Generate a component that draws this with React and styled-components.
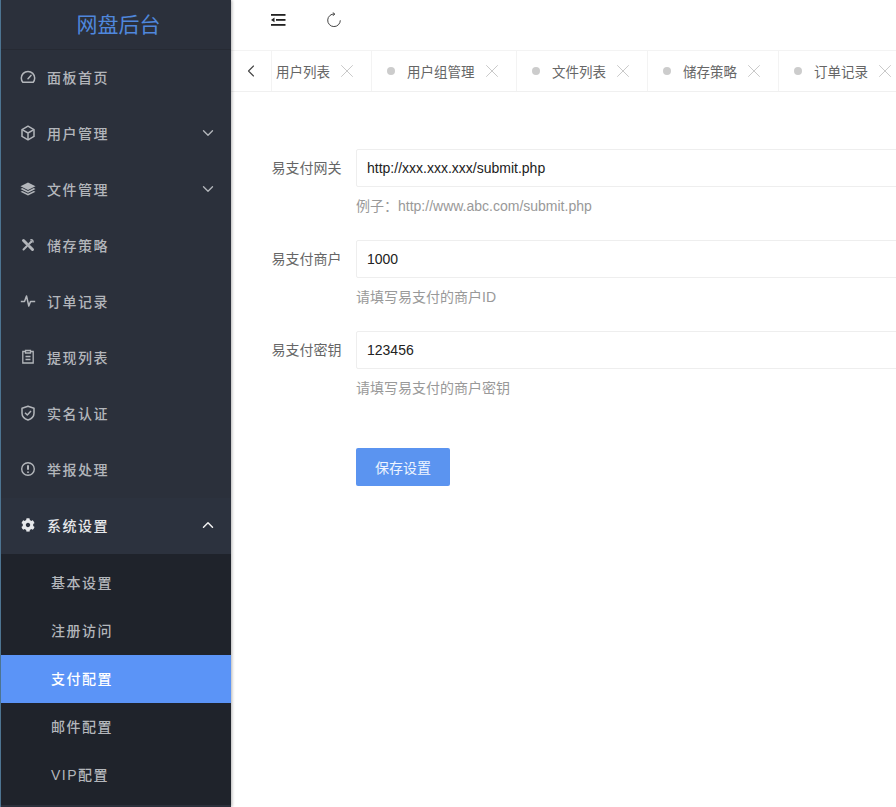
import React from 'react'
import styled, { createGlobalStyle } from 'styled-components'
import { FaCog } from 'react-icons/fa'
import { ChevronDown, ChevronLeft, ChevronUp, X } from 'lucide-react'

const GlobalStyle = createGlobalStyle`
html,body{
    margin:0;
    padding:0;
    background:#fff;
}
*{
    box-sizing:border-box;
}
`

const GaugeIcon = () => (
    <svg width="16" height="16" viewBox="0 0 16 16" fill="none" stroke="currentColor" strokeWidth="1.500">
        <path d="M2.800 13.300h10.400c1-1.200 1.500-2.600 1.500-4.200A6.700 6.700 0 0 0 1.300 9.100c0 1.600.5 3 1.500 4.200z" />
        <path d="M8 9.800 11 6.400" strokeLinecap="round" />
    </svg>
)

const CubeIcon = () => (
    <svg width="16" height="16" viewBox="0 0 16 16" fill="none" stroke="currentColor" strokeWidth="1.500" strokeLinejoin="round">
        <path d="M8 1.200 14 4.600v6.800L8 14.800 2 11.400V4.600z" />
        <path d="M2.500 4.900 8 8l5.500-3.100M8 8v6.400" />
    </svg>
)

const LayersIcon = () => (
    <svg width="16" height="16" viewBox="0 0 16 16" fill="currentColor">
        <path d="M8 1.500 15.500 5.200 8 8.900.5 5.200z" />
        <path d="M2.300 7.100.5 8 8 11.700 15.500 8l-1.800-.9L8 9.900z" />
        <path d="M2.300 9.900.5 10.800 8 14.500l7.500-3.700-1.800-.9L8 12.700z" />
    </svg>
)

const ToolsIcon = () => (
    <svg width="16" height="16" viewBox="0 0 16 16" fill="none" stroke="currentColor" strokeLinecap="round">
        <path d="M3.500 12.500 11.500 4.500" strokeWidth="2" />
        <path d="M3.500 3.500 6.500 6.500" strokeWidth="3" />
        <path d="M9.500 9.500 12.500 12.500" strokeWidth="3" />
        <path d="M10.800 2.800c1.400-.4 2.600.8 2.200 2.200" strokeWidth="1.400" />
    </svg>
)

const PulseIcon = () => (
    <svg width="16" height="16" viewBox="0 0 16 16" fill="none" stroke="currentColor" strokeWidth="1.500" strokeLinejoin="round">
        <path d="M.8 8.500h3.700L6.500 3l2.300 10 1.700-4.500h4.700" />
    </svg>
)

const NoteIcon = () => (
    <svg width="16" height="16" viewBox="0 0 16 16" fill="none" stroke="currentColor" strokeWidth="1.300">
        <path d="M5.500 2.500H2.800v11.500h10.400V2.500h-2.700" />
        <path d="M5.500 1.500h5v2.500h-5z" />
        <path d="M5.500 7.500h5M5.500 10.500h5" />
    </svg>
)

const ShieldIcon = () => (
    <svg width="16" height="16" viewBox="0 0 16 16" fill="none" stroke="currentColor" strokeWidth="1.500" strokeLinejoin="round">
        <path d="M8 1.200 14 3.200v5c0 3.200-2.600 5.600-6 6.800-3.400-1.200-6-3.600-6-6.800v-5z" />
        <path d="M5 7.800 7.300 10 11 6" />
    </svg>
)

const AlertIcon = () => (
    <svg width="16" height="16" viewBox="0 0 16 16" fill="none" stroke="currentColor" strokeWidth="1.400">
        <circle cx="8" cy="8" r="6.300" />
        <path d="M8 4.300v4.500" strokeWidth="2" />
        <circle cx="8" cy="11.200" r=".9" fill="currentColor" stroke="none" />
    </svg>
)

const OutdentIcon = () => (
    <svg width="16" height="14" viewBox="0 0 16 14" fill="#222">
        <rect x="1" y="1" width="14.500" height="1.800" />
        <rect x="6" y="6" width="9.500" height="1.800" />
        <rect x="1" y="11" width="14.500" height="1.800" />
        <path d="M4.500 4.600v4.600L1 6.900z" />
    </svg>
)

const RefreshIcon = () => (
    <svg width="16" height="16" viewBox="0 0 16 16" fill="none" stroke="#444" strokeWidth="1">
        <path d="M14.300 8.300A6.300 6.300 0 1 1 8.500 2" />
        <path d="M6.800.6 8.800 2 7 3.800" />
    </svg>
)

const menus = [
    { label: '面板首页', icon: <GaugeIcon /> },
    { label: '用户管理', icon: <CubeIcon />, arrow: 'down' },
    { label: '文件管理', icon: <LayersIcon />, arrow: 'down' },
    { label: '储存策略', icon: <ToolsIcon /> },
    { label: '订单记录', icon: <PulseIcon /> },
    { label: '提现列表', icon: <NoteIcon /> },
    { label: '实名认证', icon: <ShieldIcon /> },
    { label: '举报处理', icon: <AlertIcon /> },
    { label: '系统设置', icon: <FaCog size={14} />, arrow: 'up', open: true },
]

const subMenus = ['基本设置', '注册访问', '支付配置', '邮件配置', 'VIP配置']

const tabs = [
    { label: '用户列表', width: 100, noDot: true },
    { label: '用户组管理', width: 145 },
    { label: '文件列表', width: 131 },
    { label: '储存策略', width: 131 },
    { label: '订单记录', width: 131 },
]

const fields = [
    { label: '易支付网关', value: 'http://xxx.xxx.xxx/submit.php', help: '例子：http://www.abc.com/submit.php' },
    { label: '易支付商户', value: '1000', help: '请填写易支付的商户ID' },
    { label: '易支付密钥', value: '123456', help: '请填写易支付的商户密钥' },
]

function App() {
    return (
        <Page>
            <GlobalStyle />
            <Sidebar>
                <Logo>网盘后台</Logo>
                {menus.map((menu) => (
                    <MenuItem key={menu.label} $open={menu.open}>
                        <MenuIcon>{menu.icon}</MenuIcon>
                        <span>{menu.label}</span>
                        {menu.arrow === 'down' && <ArrowBox><ChevronDown size={18} strokeWidth={1.800} /></ArrowBox>}
                        {menu.arrow === 'up' && <ArrowBox $light><ChevronUp size={18} strokeWidth={2} /></ArrowBox>}
                    </MenuItem>
                ))}
                <SubMenu>
                    {subMenus.map((name) => (
                        <SubItem key={name} $active={name === '支付配置'}>{name}</SubItem>
                    ))}
                </SubMenu>
            </Sidebar>
            <Main>
                <TopBar>
                    <TopIcon><OutdentIcon /></TopIcon>
                    <TopIcon><RefreshIcon /></TopIcon>
                </TopBar>
                <TabBar>
                    <TabArrow><ChevronLeft size={20} strokeWidth={1.300} /></TabArrow>
                    {tabs.map((tab) => (
                        <Tab key={tab.label} $width={tab.width} $noDot={tab.noDot}>
                            {!tab.noDot && <TabDot />}
                            <TabLabel>{tab.label}</TabLabel>
                            <TabClose><X size={22} strokeWidth={0.700} /></TabClose>
                        </Tab>
                    ))}
                </TabBar>
                <Form>
                    {fields.map((field) => (
                        <Field key={field.label}>
                            <FieldLabel>{field.label}</FieldLabel>
                            <FieldBody>
                                <Input readOnly value={field.value} />
                                <Help>{field.help}</Help>
                            </FieldBody>
                        </Field>
                    ))}
                    <SaveButton>保存设置</SaveButton>
                </Form>
            </Main>
        </Page>
    )
}

const Page = styled.div`
width:896px;
height:807px;
display:flex;
overflow:hidden;
font-family:"Liberation Sans","Noto Sans CJK SC",sans-serif;
`
const Sidebar = styled.div`
width:231px;
height:807px;
flex-shrink:0;
background:#2b303b;
border-left:1px solid #4d7491;
box-shadow:1px 0 3px rgba(0,0,0,.3);
z-index:1;
`
const Logo = styled.div`
height:50px;
line-height:50px;
padding-left:5px;
text-align:center;
font-size:21px;
color:#4f87dc;
border-bottom:1px solid #262a33;
`
const MenuItem = styled.div`
height:56px;
display:flex;
align-items:center;
padding:0 14px 2px 19px;
font-size:14px;
font-weight:500;
letter-spacing:1.500px;
color:${(p) => (p.$open ? '#e6e8eb' : '#b3b6bb')};
background:${(p) => (p.$open ? '#2c323e' : 'transparent')};
`
const MenuIcon = styled.span`
width:16px;
height:16px;
margin-right:11px;
display:flex;
align-items:center;
justify-content:center;
`
const ArrowBox = styled.span`
margin-left:auto;
display:flex;
color:${(p) => (p.$light ? '#f0f0f0' : '#b3b6bb')};
`
const SubMenu = styled.div`
height:251px;
padding-top:5px;
background:#1f232b;
`
const SubItem = styled.div`
height:48px;
line-height:48px;
padding-left:50px;
font-size:14px;
font-weight:500;
letter-spacing:1.500px;
color:${(p) => (p.$active ? '#ffffff' : '#b3b6bb')};
background:${(p) => (p.$active ? '#5b94f7' : 'transparent')};
`
const Main = styled.div`
flex:1;
min-width:0;
`
const TopBar = styled.div`
height:50px;
display:flex;
align-items:center;
padding-left:39px;
gap:40px;
`
const TopIcon = styled.span`
width:16px;
height:16px;
display:flex;
align-items:center;
justify-content:center;
margin-bottom:10px;
`
const TabBar = styled.div`
height:42px;
display:flex;
border-top:1px solid #f3f3f3;
border-bottom:1px solid #f0f0f0;
overflow:hidden;
`
const TabArrow = styled.div`
width:40px;
flex-shrink:0;
display:flex;
align-items:center;
justify-content:center;
color:#444;
`
const Tab = styled.div`
width:${(p) => p.$width}px;
flex-shrink:0;
display:flex;
align-items:center;
padding-left:${(p) => (p.$noDot ? 4 : 15)}px;
border-left:1px solid #f3f3f3;
font-size:13.500px;
color:#666;
`
const TabDot = styled.i`
width:8px;
height:8px;
border-radius:50%;
background:#ccc;
margin-right:12px;
`
const TabLabel = styled.span`
white-space:nowrap;
`
const TabClose = styled.span`
display:flex;
margin-left:6px;
color:#aaa;
`
const Form = styled.div`
padding:57px 0 0 40px;
`
const Field = styled.div`
display:flex;
height:91px;
`
const FieldLabel = styled.label`
width:70.500px;
flex-shrink:0;
margin-right:14.500px;
line-height:38px;
text-align:right;
font-size:14px;
color:#666;
white-space:nowrap;
`
const FieldBody = styled.div`
width:900px;
flex-shrink:0;
`
const Input = styled.input`
display:block;
width:100%;
height:38px;
padding:0 10px;
border:1px solid #eee;
border-radius:2px;
outline:none;
font-family:inherit;
font-size:14px;
color:#222;
`
const Help = styled.div`
margin-top:9px;
line-height:20px;
font-size:14px;
color:#999;
`
const SaveButton = styled.button`
display:block;
margin:26px 0 0 85px;
width:94px;
height:38px;
border:none;
border-radius:2px;
background:#5b94f0;
color:#eef4ff;
font-family:inherit;
font-size:14px;
`

export default App
